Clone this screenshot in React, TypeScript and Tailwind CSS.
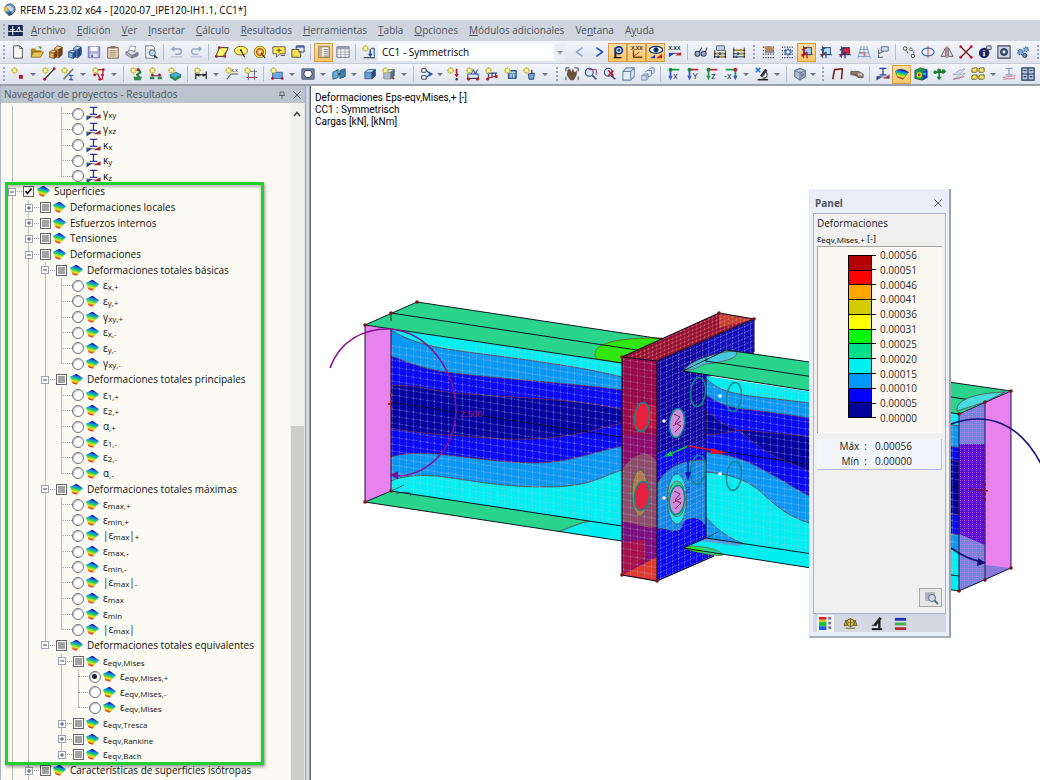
import type { ReactNode } from "react";

/* ---------- small drawing helpers ---------- */

const L = (d: string, stroke = "#333", w = 1, fill = "none") => (
  <path d={d} stroke={stroke} strokeWidth={w} fill={fill} strokeLinejoin="round" />
);
const F = (d: string, fill: string) => <path d={d} fill={fill} />;
const D = (x: number, y: number, fill = "#c8102e", r = 1.6) => <circle cx={x} cy={y} r={r} fill={fill} />;
const spark = (
  <g>
    <circle cx="4" cy="4" r="3.200" fill="#e6e070" stroke="#a8a840" strokeWidth="0.600" />
    <path d="M4 0V8M0 4H8" stroke="#b8b030" strokeWidth="0.700" />
    <circle cx="4" cy="4" r="1.600" fill="#fdfdc0" />
  </g>
);
const cube = (light: string, mid: string, dark: string) => (
  <g stroke={dark} strokeWidth="0.700" strokeLinejoin="round">
    <path d="M2 6L6 3L14 3L14 10L10 13.500L2 13.500Z" fill={mid} />
    <path d="M2 6L6 3L14 3L10 6Z" fill={light} />
    <path d="M10 6L14 3L14 10L10 13.500Z" fill={dark} />
  </g>
);
const stack = (light: string, mid: string, dark: string) => (
  <g stroke={dark} strokeWidth="0.600" strokeLinejoin="round">
    <path d="M6 4L10 1L15 2.500L15 11L11 14.500L6 13Z" fill={mid} />
    <path d="M6 4L10 1L15 2.500L11 5.500Z" fill={light} />
    <path d="M11 5.500L15 2.500L15 11L11 14.500Z" fill={dark} />
    <path d="M0.500 8L4 6L9 7L9 13L6 15.500L0.500 14Z" fill={mid} />
    <path d="M0.500 8L4 6L9 7L6 9Z" fill={light} />
    <path d="M6 9L9 7L9 13L6 15.500Z" fill={dark} />
    <path d="M7 4.500L9 5M2 10.500L4.500 11M2 12.500L4.500 13" stroke={light} strokeWidth="1" />
  </g>
);
const axisIcon = (text: string, a: string, b: string) => (
  <g>
    {L("M4 12V3", a, 2)}
    {L("M4 3H14", b, 2)}
    {D(4, 3, "#118833", 2.2)}
    {F("M1.500 10H6.500L4 15Z", a)}
    <text x="7" y="14" fontSize="10" fontFamily="Liberation Sans" fill="#234">{text}</text>
  </g>
);
const gridDots = (
  <path d="M1 2.500H15M1 6.500H15M1 10.500H15M1 14.500H15" stroke="#334" strokeWidth="1.300" strokeDasharray="1.300 1.500" />
);
const meshBox = (c: string, body: string) => (
  <g>
    {L("M4 1V15M1 11H15", "#222", 0.8)}
    <rect x="5" y="3" width="8" height="8" fill={c} stroke="#223a70" />
    {L("M2 6L8 3M2 13L8 8M8 15V8", body, 1.5)}
    {D(4, 11, "#c01020", 1.3)}
  </g>
);

const ICONS: Record<string, ReactNode> = {
  page: <g>{L("M3 1H10L13 4V15H3Z", "#444", 1, "#fff")}{L("M10 1V4H13", "#444")}</g>,
  open: <g>{F("M1 4H6L7 6H13V13H1Z", "#b08a1c")}{L("M1 14L4 8H15.500L12 14Z", "#7a5a10", 0.8, "#e7c75c")}{F("M9 1L14 2L12 5Z", "#7d9a3c")}</g>,
  stackA: stack("#f3cf8a", "#d09238", "#6a4018"),
  stackB: stack("#b9d3f6", "#5c8ad0", "#26457a"),
  save: <g>{L("M1.500 2H14.500V14.500H1.500Z", "#6a6ea6", 1, "#a9aed8")}{F("M4 2H12V7H4Z", "#fff")}{F("M4 10H12V14H4Z", "#e4e4f0")}{F("M5 11H7V14H5Z", "#555a90")}</g>,
  clip: <g>{L("M2 3H14V15H2Z", "#6a4a2a", 1, "#f4e6d0")}{F("M5 1H11V4H5Z", "#8a7a6a")}{L("M4 6.500H12M4 8.500H12M4 10.500H12M4 12.500H12", "#8a6a4a", 0.8)}</g>,
  print: <g>{L("M4 7L6 1L12 2L11 7Z", "#778", 0.8, "#fff")}{L("M1 8L7 6L15 9L8 12Z", "#667", 0.8, "#dadde6")}{L("M1 8L8 12V15L1 11Z", "#667", 0.8, "#b4bac8")}{L("M8 12L15 9V12L8 15Z", "#667", 0.8, "#8d93a8")}{D(12, 12, "#3a7ac8", 1)}</g>,
  preview: <g>{L("M2 1H10L12 3V15H2Z", "#667", 1, "#fff")}{L("M4 5H10M4 7H9M4 9H8", "#99a", 0.8)}<circle cx="9.500" cy="9" r="3.500" fill="#bcd8ee" stroke="#456" />{L("M12 12L15 15", "#345", 2)}</g>,
  undo: <g>{L("M4 4.500H10C14 4.500 14 10.500 10 10.500H6", "#8fa3c2", 1.8)}{F("M5 1V8L1 4.500Z", "#8fa3c2")}{L("M1 13.500H14", "#a9b8d0")}</g>,
  redo: <g>{L("M12 4.500H6C2 4.500 2 10.500 6 10.500H10", "#9aabc6", 1.8)}{F("M11 1V8L15 4.500Z", "#9aabc6")}{L("M2 13.500H15", "#a9b8d0")}</g>,
  selPar: <g>{L("M5 3H15L11 13H1Z", "#222", 1, "#fff46a")}{D(5, 3)}{D(1.5, 13)}{D(11, 13)}{L("M8 14L14 6", "#555")}</g>,
  selEll: <g><ellipse cx="8" cy="6.500" rx="7.500" ry="5" fill="#fff46a" stroke="#7a5a10" />{L("M8 6L12 14", "#222", 1.3)}{D(8, 6, "#222", 1.2)}</g>,
  selRing: <g><circle cx="8" cy="8" r="6.500" fill="#fff046" stroke="#8a6a20" /><circle cx="8" cy="8" r="4" fill="#f5b030" stroke="#a01818" />{D(8, 8, "#fff", 1.6)}{L("M9 9L14 15", "#333", 1.2)}</g>,
  selNote: <g>{L("M1 2H15V10H9L5 14V10H1Z", "#555", 1, "#ffe94a")}{L("M5 6H11M8 4V9M10 12H15", "#444")}</g>,
  selWin: <g>{L("M6 1H15V8H6Z", "#334", 1, "#dfe8f8")}{F("M6 1H15V3H6Z", "#3f63a8")}{L("M1 5H9V8H11V14H1Z", "#444", 1, "#f7e04e")}</g>,
  navList: <g>{L("M2 2H14V14H2Z", "#6a4a2a", 1, "#fff")}{F("M2 2H6V14H2Z", "#c9b18a")}{L("M7.500 5H13M7.500 7.500H13M7.500 10H13M7.500 12.500H13", "#555", 0.9)}</g>,
  table: <g>{L("M1 2H15V14H1Z", "#5a6070", 1, "#fff")}{F("M1 2H15V5H1Z", "#9aa2b4")}{L("M1 8H15M1 11H15M5.500 2V14M10.500 2V14", "#8a90a0", 0.8)}</g>,
  loadNew: <g>{L("M9.500 5V11", "#2a4a8a", 1.8)}{F("M7 10H12L9.500 14Z", "#2a4a8a")}{L("M10 4H14V13", "#5a78a8", 1.6)}{L("M2 14.500H15", "#333", 1.2)}{spark}</g>,
  left: L("M11 3L4 8L11 13", "#8fa2dc", 1.8),
  right: L("M5 3L12 8L5 13", "#2a55c0", 1.8),
  viewP: <g>{L("M5 14V3", "#182848", 2.4)}<circle cx="9" cy="6" r="4" fill="#dfe8ff" stroke="#123a80" strokeWidth="2" />{D(9, 6, "#123a80", 1.6)}{L("M3 14.500H12", "#111", 1.4)}</g>,
  viewX: <g>{L("M4 6V14H14", "#6a4a10", 1.6)}<text x="1" y="6" fontSize="6" fontWeight="700" fontFamily="Liberation Sans" fill="#502010">X.XX</text>{L("M4 13L11 8", "#b02020")}</g>,
  viewEye: <g><ellipse cx="8" cy="5.500" rx="7.500" ry="4" fill="#fff" stroke="#14356e" strokeWidth="1.500" />{D(8, 5.5, "#14458e", 3)}{D(8, 5.5, "#000", 1.2)}{F("M1 15L7 11V15Z", "#2a44b8")}{F("M15 15V10L8 15Z", "#c02020")}</g>,
  xxx: <g><text x="0.500" y="6" fontSize="6" fontWeight="700" fontFamily="Liberation Sans" fill="#222">X.XX</text>{L("M1 9.500H15", "#444")}{F("M1 9H8L1 14Z", "#2a44b8")}{F("M15 8L8 12H15Z", "#c02020")}</g>,
  glasses: <g><circle cx="4" cy="10" r="2.800" fill="#9fb0cc" stroke="#35405a" strokeWidth="1.300" /><circle cx="11" cy="10" r="2.800" fill="#9fb0cc" stroke="#35405a" strokeWidth="1.300" />{L("M6 8L9 3M13 8L15 3", "#35405a", 1.2)}</g>,
  abacusA: <g>{L("M2 6V15M14 6V15M1 10H15M1 13.500H15", "#222", 1.1)}{L("M4 1H13V6H4Z", "#456", 1, "#cfd8f0")}{D(5, 10, "#c8a020")}{D(8, 10, "#2a5a9a")}{D(11, 10, "#c8a020")}{D(6, 13.5, "#2a5a9a")}{D(10, 13.5, "#c8a020")}</g>,
  abacusB: <g>{L("M2 3V15M14 3V15M1 6H15M1 10H15M1 13.500H15", "#222", 1)}{D(5, 6, "#c8a020")}{D(10, 6, "#c8a020")}{D(7, 10, "#2a5a9a")}{D(11, 10, "#c8a020")}{D(5, 13.5, "#2a5a9a")}</g>,
  gridHand: <g>{gridDots}{F("M2 2L10 1L14 4L12 7L5 7Z", "#b58a62")}{L("M3 8H14", "#333")}</g>,
  gridSun: <g>{gridDots}<path d="M8 3V13M3 8H13M4.500 4.500L11.500 11.500M11.500 4.500L4.500 11.500" stroke="#2a58a8" /><circle cx="8" cy="8" r="2.600" fill="#fff" stroke="#2a58a8" strokeWidth="1.200" /></g>,
  planeA: meshBox("#9fd2f0", "#c01020"),
  planeB: meshBox("#b8dcf4", "#2458a0"),
  planeC: meshBox("#d8203a", "#203a80"),
  gridTilt: <g>{L("M5 1L1 15M8 1L8 15M11 1L15 15M3 5H13M2 9H14M1 13H15", "#6a8eae", 0.9)}{L("M3 9H9V13", "#b04050", 0.9)}</g>,
  objSnap: <g>{L("M6 2H14V7H6Z", "#567", 1, "#cfe0ee")}{L("M3 5V14M3 10L9 7M2 14H8", "#567", 1.2)}</g>,
  move: <g><circle cx="3.500" cy="4" r="2" fill="#fff" stroke="#333" /><circle cx="12.500" cy="12.500" r="2" fill="#fff" stroke="#333" /><circle cx="10" cy="5" r="1.600" fill="#fff" stroke="#555" />{L("M5 6L7 10M12 6L14 10", "#333", 0.8)}</g>,
  rotate: <g><ellipse cx="8" cy="8" rx="7" ry="4.500" fill="none" stroke="#3a6aa8" strokeWidth="1.300" />{L("M8 1V15", "#c04040", 1)}</g>,
  mirror: <g>{L("M6.500 3V13H1Z", "#555", 1, "#dde")}{L("M9.500 3V13H15Z", "#555", 1, "#dde")}{L("M8 1V15", "#c02020", 0.9)}</g>,
  divide: <g>{L("M2 2L14 14M14 2L2 14", "#7a1c1c", 1.6)}{D(2, 2)}{D(14, 2)}{D(2, 14)}{D(14, 14)}</g>,
  info: <g><circle cx="7" cy="9" r="6" fill="#1e2c66" /><text x="5.400" y="13" fontSize="10" fontWeight="700" fontFamily="Liberation Serif" fill="#fff">i</text>{L("M10 1H15V5H10Z", "#445", 1, "#cfd8e8")}</g>,
  settings: <g>{L("M1 1H15V15H1Z", "#445", 1.2, "#cdd6e2")}<circle cx="8" cy="8" r="4" fill="#3c5a88" stroke="#1c2c4a" />{D(8, 8, "#fff", 1.6)}</g>,
  gears: <g><circle cx="5" cy="8" r="3" fill="#7aa8dc" stroke="#335a8a" strokeDasharray="1.500 1" strokeWidth="1.300" /><circle cx="11.500" cy="5" r="2.600" fill="#8ab4dc" stroke="#335a8a" strokeDasharray="1.500 1" strokeWidth="1.300" /><circle cx="10" cy="12" r="2.400" fill="#5a88bc" stroke="#23446e" /></g>,

  node: <g>{F("M9 9H13.500V13.500H9Z", "#b01830")}{spark}</g>,
  line: <g>{L("M3 14L14 2", "#333", 1.3)}{D(3, 14)}{D(14, 2)}{spark}</g>,
  member: <g>{L("M3 14L14 2", "#777", 2)}{L("M9 9.500H14M11.500 9.500V14.500M9 14.500H14", "#2a48b0", 1.2)}{spark}</g>,
  poly: <g>{L("M3 8H7L9 14H12V9L13 3H6", "#a02030", 1.4)}{D(13, 3)}{D(9, 14)}{D(3, 9)}{D(12, 9)}{spark}</g>,
  supA: <g>{L("M9 2L12 6L8 9L12 13", "#2a7a38", 2.4)}{F("M4 11H14L12 15H5Z", "#2f8a48")}{D(9, 3)}{spark}</g>,
  supB: <g>{L("M3 10H14", "#333", 1.2)}{F("M1 11H6V14H1ZM10 11H15V14H10Z", "#2f8a48")}{D(4, 9)}{D(12, 9)}{spark}</g>,
  supC: <g>{L("M2 9L9 6L15 9L8 13Z", "#1e5a6a", 0.8, "#4ab0c8")}{F("M2 9V12L8 16V13ZM15 9V12L8 16V13Z", "#2f8a58")}{spark}</g>,
  dimH: <g>{L("M2 5V14M14 5V14M2 9H14", "#222", 1.3)}{F("M2 9L6 7V11ZM14 9L10 7V11Z", "#222")}{spark}</g>,
  dimX: <g>{L("M2 14L7 8H15", "#555", 1.2)}<text x="7" y="6" fontSize="6" fontFamily="Liberation Sans" fill="#222">x.x</text>{spark}</g>,
  frame: <g>{L("M3 5H15M3 12H15M5 3V15M12 3V15", "#667", 1)}{L("M3 12H15", "#b03030", 0.8)}{spark}</g>,
  surf: <g>{L("M3 6H14V13H3Z", "#2a5a9a", 1, "#6aa8e0")}{D(3, 13)}{D(14, 13)}{spark}</g>,
  opening: <g>{L("M1 2H15V14H1Z", "#4a5a78", 1, "#6f86ac")}{L("M5 4H11L13 8L10 12H6L3 8Z", "#333", 1, "#fff")}</g>,
  solidP: <g>{L("M1 6L7 3V12L1 14Z", "#24567a", 1, "#6ab0d8")}{L("M9 4L15 2V11L9 13Z", "#24567a", 1, "#3a80b0")}{L("M7 8H9", "#333", 2)}</g>,
  cubeB: cube("#c0dcf4", "#6a9ad0", "#24467a"),
  cubeN: <g>{cube("#e4e8ee", "#b0bccc", "#5a6a80")}{spark}{D(13, 13, "#b02020", 1.3)}</g>,
  release: <g>{L("M2 2H7V6H2ZM2 10H7V14H2Z", "#333", 1, "#fff")}{L("M7 4L12 8L7 12", "#2458a0", 1.3)}{F("M10 5L15 8L10 11Z", "#2458a0")}</g>,
  loadP: <g>{L("M11 2V9", "#c01828", 2)}{F("M8.500 8H13.500L11 12Z", "#c01828")}{D(11, 14, "#333", 1.4)}{spark}</g>,
  loadA: <g>{L("M2 13V8H14V13M6 8L8 3L11 8L13 3", "#2a4aa0", 1.2)}{L("M1 13H15", "#222", 1.2)}{D(3, 14)}{D(13, 14)}{spark}</g>,
  loadB: <g>{L("M2 7H14M4 7V12M8 7V12M12 7V12", "#2a4aa0", 1.3)}{L("M2 13L14 10", "#b02020", 1.3)}{D(3, 14)}{D(13, 11)}{spark}</g>,
  loadC: <g>{L("M5 4H14V13H5Z", "#1c3c6a", 1, "#5a8cc4")}{L("M6 6H13M8 8V12M11 8V12", "#fff", 1)}{spark}</g>,
  loadD: <g>{L("M10 3V9", "#2a4aa0", 1.6)}{L("M6 8L13 7L12 14H7Z", "#1c3c6a", 1, "#7ca4d0")}{spark}</g>,
  hand: <g>{F("M3 3L6 2L7 6L9 2L11 6L14 4L13 10L10 15H6L2 9Z", "#6a5242")}{L("M1 5V1H5M11 1H15V5M1 11V15M15 11V15", "#333")}</g>,
  zoomW: <g><circle cx="6" cy="6" r="4.500" fill="#d8e8f8" stroke="#34507e" strokeWidth="1.200" />{L("M9.500 9.500L14 14", "#34507e", 2)}{L("M5 3H14V9", "#a02040", 1)}</g>,
  zoomX: <g><circle cx="6" cy="6" r="4.500" fill="#d8e8f8" stroke="#34507e" strokeWidth="1.200" />{L("M9.500 9.500L14 14", "#34507e", 2)}{L("M6 4L12 10M12 4L6 10", "#c01828", 1.8)}</g>,
  boxWire: <g>{L("M1 5H10V15H1ZM1 5L5 1H14V11L10 15M10 5L14 1", "#6a86ac", 1.2, "#e4ecf6")}</g>,
  boxes: <g>{L("M1 10L3 8H8V13L6 15H1ZM5 6L7 4H12V9L10 11H8M9 3L11 1H15V6L13 8H12", "#6a86ac", 1.1, "#dde6f2")}{L("M1 10H6V15M6 10L8 8", "#6a86ac", 1)}</g>,
  axX: axisIcon("x", "#3858c8", "#18a048"),
  axY: axisIcon("Y", "#3858c8", "#c82038"),
  axZ: axisIcon("z", "#18a048", "#c82038"),
  axXm: <g>{L("M2 3H13V11", "#18a048", 2)}{F("M10.500 10H15.500L13 15Z", "#3858c8")}{D(13, 3, "#c01828", 2.2)}<text x="0" y="14" fontSize="10" fontFamily="Liberation Sans" fill="#234">-x</text></g>,
  scope: <g>{L("M3 14.500H15", "#222", 1.8)}{L("M13 3L7 11", "#333", 3)}{L("M9 13C14 13 15 9 13 6", "#333", 1.2)}{L("M1 1L6 6M6 1L1 6", "#2878c8", 1.8)}</g>,
  cubeG: <g>{L("M2 4L8 1.500L14 4V11L8 15L2 11Z", "#4a5a78", 1, "#b4c0d0")}{L("M2 4L8 7L14 4M8 7V15", "#4a5a78", 0.9)}{F("M9 8L13 6V10L9 13Z", "#7488a8")}</g>,
  bent: L("M2 14L4 3L13 2L12 14", "#7a2024", 1.8),
  beam: <g>{F("M1 5H10L15 8V12H9L1 8Z", "#8a7a76")}{L("M1 5H10L15 8V12H9V9H1Z", "#443", 0.8)}{F("M9 7H14V10H9Z", "#c8b8b0")}</g>,
  memRes: <g>{L("M4 1.500H12M8 1.500V9M4 9H12", "#2a3aa0", 1.4)}{F("M0.500 11H7L0.500 15.500Z", "#2a3aa0")}{F("M15.500 8.500V13H8.500Z", "#c02030")}{L("M0.500 10.500L15.500 12.500", "#444", 0.8)}</g>,
  rainbow: <path d="M0.500 5C3 2 9 1 15.500 6L9 14C7 12.500 4 13 2.500 11Z" fill="url(#heat)" stroke="#333" strokeWidth="0.500" />,
  surface: <path d="M0 4.500L8 1L16 6.500L8 14.500L3 12.500Z" fill="url(#heat)" />,
  heatCube: <g><path d="M1 4L7 1L15 3V12L9 15L1 13Z" fill="#1a9a48" stroke="#123" strokeWidth="0.700" /><circle cx="6" cy="9" r="3" fill="#f0e020" /><circle cx="6" cy="9" r="1.500" fill="#d02020" /><path d="M10 5L15 3V12L10 15Z" fill="#1c3cb8" />{D(12, 8, "#20d0d0", 1.6)}</g>,
  supG: <g>{L("M7 4V12M2 6H12", "#1a7a2a", 1.8)}{F("M4 11H10L7 15ZM11 3L15 5L11 8Z", "#1a8a2e")}{D(7, 4, "#1a7a2a", 2.2)}{D(2.5, 6, "#1a7a2a", 2)}{D(12, 5, "#1a7a2a", 2.4)}</g>,
  plates: <g>{L("M1 9L8 4L15 2L9 8ZM2 14L9 9L15 7L9 13Z", "#9aa4b8", 0.9, "#d8e0f0")}{L("M1 14L14 11", "#b05060", 0.8)}</g>,
  notes: <g>{L("M1 2L3 1H7V5L6 6H1ZM9 2L11 1H15V5L14 6H9ZM1 10L3 9H7V13L6 14H1ZM9 10L11 9H15V13L14 14H9Z", "#665a10", 1, "#f2e46a")}</g>,
  secCut: <g>{L("M4 1.500H12M8 1.500V9M4 9H12", "#8aa0cc", 1.4)}{L("M1 12L15 10M1 14L15 13", "#d08a98", 1.2)}</g>,
  grid4: <g>{L("M1 1H15V15H1ZM1 8H15M8 1V15", "#2a3a5a", 1.4, "#b4c4de")}{L("M3 4H6M10 4H13M3 11H6M10 11H13", "#2a3a5a", 1.2)}</g>,
};

function Icon({ name, className = "size-4" }: { name: string; className?: string }) {
  return (
    <svg viewBox="0 0 16 16" className={`${className} shrink-0`} aria-hidden="true">
      {ICONS[name]}
    </svg>
  );
}

/* ---------- toolbars ---------- */

const Sep = () => (
  <span className="flex h-4 w-[7px] shrink-0 justify-center">
    <span className="w-px bg-[#b4bccb]" />
  </span>
);
const Grip = ({ wide = false }: { wide?: boolean }) => (
  <span className={`flex h-4 shrink-0 items-center justify-center ${wide ? "w-[11px]" : "w-2"}`}>
    <span className="h-[14px] border-l-2 border-dotted border-[#9da6b8]" />
  </span>
);

/* "|" separator, ":" grip, "v" drop arrow, "'" narrow drop arrow, "*name" pressed button */
function Tools({ items }: { items: string }) {
  return (
    <>
      {items.split(" ").map((item, i) => {
        if (item === "|") return <Sep key={i} />;
        if (item === ":") return <Grip key={i} wide />;
        if (item === "v" || item === "'")
          return (
            <button key={i} type="button" aria-label="Más" className={`flex h-5 shrink-0 items-center justify-center ${item === "v" ? "w-3" : "w-2"}`}>
              <span className="border-x-[3px] border-t-[3px] border-x-transparent border-t-[#6b7280]" />
            </button>
          );
        const on = item[0] === "*";
        const name = on ? item.slice(1) : item;
        return (
          <button
            key={i}
            type="button"
            aria-label={name}
            className={`flex h-[19px] w-[19px] shrink-0 items-center justify-center ${on ? "border border-[#d39a4a] bg-linear-to-b from-[#fbdca4] to-[#fbc766]" : ""}`}
          >
            <Icon name={name} className="size-[14px]" />
          </button>
        );
      })}
    </>
  );
}

const MENU: [string, string, string][] = [
  ["", "A", "rchivo"], ["", "E", "dición"], ["", "V", "er"], ["", "I", "nsertar"], ["", "C", "álculo"], ["", "R", "esultados"],
  ["", "H", "erramientas"], ["", "T", "abla"], ["", "O", "pciones"], ["", "M", "ódulos adicionales"], ["Ve", "n", "tana"], ["A", "y", "uda"],
];

/* ---------- navigator tree ---------- */

type Row = { d: number; bars: string; kind: "check" | "mixed" | "radio"; exp?: "+" | "-"; last?: boolean; label: string; sub?: string; tail?: string; on?: boolean; icon?: string };

const leaf = (label: string, sub: string, last = false, tail = "", bars = "012"): Row => ({ d: 3, bars, kind: "radio", label, sub, last, tail });
const group = (d: number, bars: string, exp: "+" | "-", label: string, last = false): Row => ({ d, bars, kind: "mixed", exp, label, last });
const member = (label: string, sub: string, last = false): Row => ({ d: 3, bars: "0", kind: "radio", label, sub, last, icon: "memRes" });

const ROWS: Row[] = [
  member("γ", "xy"), member("γ", "xz"), member("κ", "x"), member("κ", "y"), member("κ", "z", true),
  { d: 0, bars: "", kind: "check", exp: "-", label: "Superficies" },
  group(1, "0", "+", "Deformaciones locales"),
  group(1, "0", "+", "Esfuerzos internos"),
  group(1, "0", "+", "Tensiones"),
  group(1, "0", "-", "Deformaciones"),
  group(2, "01", "-", "Deformaciones totales básicas"),
  leaf("ε", "x,+"), leaf("ε", "y,+"), leaf("γ", "xy,+"), leaf("ε", "x,-"), leaf("ε", "y,-"), leaf("γ", "xy,-", true),
  group(2, "01", "-", "Deformaciones totales principales"),
  leaf("ε", "1,+"), leaf("ε", "2,+"), leaf("α", ",+"), leaf("ε", "1,-"), leaf("ε", "2,-"), leaf("α", ",-", true),
  group(2, "01", "-", "Deformaciones totales máximas"),
  leaf("ε", "max,+"), leaf("ε", "min,+"), leaf("|ε", "max", false, "+"), leaf("ε", "max,-"), leaf("ε", "min,-"),
  leaf("|ε", "max", false, "-"), leaf("ε", "max"), leaf("ε", "min"), leaf("|ε", "max", true, " "),
  group(2, "01", "-", "Deformaciones totales equivalentes", true),
  { d: 3, bars: "01", kind: "mixed", exp: "-", label: "ε", sub: "eqv,Mises" },
  { d: 4, bars: "013", kind: "radio", label: "ε", sub: "eqv,Mises,+", on: true },
  { d: 4, bars: "013", kind: "radio", label: "ε", sub: "eqv,Mises,-" },
  { d: 4, bars: "013", kind: "radio", label: "ε", sub: "eqv,Mises", last: true },
  { d: 3, bars: "01", kind: "mixed", exp: "+", label: "ε", sub: "eqv,Tresca" },
  { d: 3, bars: "01", kind: "mixed", exp: "+", label: "ε", sub: "eqv,Rankine" },
  { d: 3, bars: "01", kind: "mixed", exp: "+", label: "ε", sub: "eqv,Bach", last: true },
  group(1, "0", "+", "Características de superficies isótropas"),
  group(1, "0", "+", ""),
];

const cellWidth = (i: number) => (i % 2 ? "w-[17px]" : "w-4");

function TreeRow({ row, index }: { row: Row; index: number }) {
  const id = `node-${index}`;
  return (
    <li className="flex min-h-0 items-center overflow-visible">
      {Array.from({ length: row.d }, (_, i) => (
        <span key={i} className={`flex shrink-0 justify-center self-stretch ${cellWidth(i)}`}>
          {row.bars.includes(String(i)) && <span className="w-px bg-[#bdbdb8]" />}
        </span>
      ))}
      <span className={`grid shrink-0 self-stretch ${cellWidth(row.d)}`}>
        <span className={`col-start-1 row-start-1 w-px justify-self-center bg-[#bdbdb8] ${row.last ? "h-1/2" : ""} ${row.d === 0 ? "mt-2" : ""}`} />
        <span className="col-start-1 row-start-1 ml-2 -mr-1 self-center border-t border-dotted border-[#a0a09c]" />
        {row.exp && (
          <button type="button" aria-label={row.exp === "+" ? "Expandir" : "Contraer"} className="col-start-1 row-start-1 flex size-2 items-center justify-center self-center justify-self-center border border-[#9aa4b4] bg-white">
            <svg viewBox="0 0 6 6" className="size-[6px]"><path d={row.exp === "+" ? "M1 3H5M3 1V5" : "M1 3H5"} stroke="#3a4a7a" /></svg>
          </button>
        )}
      </span>
      <span className={`grid shrink-0 place-items-center ${cellWidth(row.d + 1)}`}>
        {row.kind === "radio" ? (
          <>
            <input id={id} type="radio" name={row.icon ? "member" : "surface"} defaultChecked={row.on} className="col-start-1 row-start-1 size-3 appearance-none rounded-full border border-[#6b7078] bg-white shadow-[inset_1px_1px_1px_#c4c8cc]" />
            {row.on && <span className="pointer-events-none col-start-1 row-start-1 size-[5px] rounded-full bg-[#16202c]" />}
          </>
        ) : (
          <>
            <input id={id} type="checkbox" aria-label={row.label ? undefined : "Resultados"} defaultChecked={row.kind === "check"} className="col-start-1 row-start-1 size-[11px] appearance-none border border-[#62666c] bg-white" />
            {row.kind === "mixed" && <span className="pointer-events-none col-start-1 row-start-1 size-[7px] bg-[#a2a2a2]" />}
            {row.kind === "check" && <svg viewBox="0 0 9 9" className="pointer-events-none col-start-1 row-start-1 size-[9px]"><path d="M1.500 4L3.500 6.500L7.500 1.500" stroke="#111" strokeWidth="1.700" fill="none" /></svg>}
          </>
        )}
      </span>
      <Icon name={row.icon ?? "surface"} className={row.icon ? "size-[15px]" : "size-[13px]"} />
      {row.label && (
        <label htmlFor={id} className={`text-[10px] leading-[15px] whitespace-nowrap text-[#111] ${row.icon ? "pl-0.5" : "pl-1"}`}>
          {row.label}
          {row.sub && <sub className="-bottom-px text-[8px]">{row.sub}</sub>}
          {row.tail && <>|{row.tail !== " " && <sub className="-bottom-px text-[8px]">{row.tail}</sub>}</>}
        </label>
      )}
    </li>
  );
}

/* ---------- finite element view ---------- */

const C = { cyan: "#00eef0", sky: "#0a98f5", blue: "#0808f4", navy: "#0000a0", green: "#2ad48c", lime: "#30e810", pink: "#e782ef" };

const LEFT_T = {
  sky: "M391 330C403 337 415 344 453 350C500 357 560 362 622 377",
  blue: "M391 356C410 363 425 370 453 373C500 379 560 382 622 390",
  navy: "M391 386C405 383 430 390 453 393C520 398 590 400 622 410",
  blue2: "M391 428C420 434 450 435 503 439C560 441 590 431 622 423",
  sky2: "M391 457C405 452 430 453 437 454C470 457 500 463 537 463C570 462 590 453 622 446",
  cyan2: "M391 481C405 475 420 475 437 476C470 480 500 487 545 487C590 487 600 477 622 470",
};
const RIGHT_T = {
  sky: "M706 378C717 390 730 394 767 398C830 405 900 415 959 426",
  blue: "M706 395C723 407 735 408 743 409C800 415 880 430 959 448",
  sky2: "M706 452C735 455 750 462 767 472C790 484 800 492 812 497C860 515 910 525 959 535",
  cyan2: "M706 472C735 474 750 483 760 491C780 510 790 517 812 524C860 540 910 545 959 550",
};

function Bands({ t, x, bottom, order }: { t: Record<string, string>; x: number; bottom: number; order: [string, string][] }) {
  return (
    <>
      {order.map(([key, fill]) => (
        <path key={key} d={`${t[key]}V${bottom}H${x}Z`} fill={fill} />
      ))}
      {order.map(([key]) => (
        <path key={key} d={t[key]} fill="none" stroke="#7c3038" strokeWidth="0.800" />
      ))}
    </>
  );
}

function Bolt({ x, y, fill }: { x: number; y: number; fill: string }) {
  return <ellipse cx={x} cy={y} rx="7.500" ry="14.500" fill={fill} stroke="#0a8a8c" strokeWidth="1.500" transform={`rotate(6 ${x} ${y})`} />;
}

const Corner = ({ p }: { p: [number, number][] }) => <>{p.map(([x, y]) => <circle key={`${x}-${y}`} cx={x} cy={y} r="1.800" fill="#7c1018" />)}</>;

function Model() {
  return (
    <svg viewBox="311 86 729 694" className="block h-[694px] w-[729px] shrink-0" role="img" aria-label="Modelo">
      <defs>
        <pattern id="mesh" width="7" height="7" patternUnits="userSpaceOnUse" patternTransform="skewY(8.500)">
          <path d="M0 0.500H7M0.500 0V7" stroke="#c0c4e8" strokeWidth="0.700" strokeDasharray="1.600 1.200" opacity="0.550" />
        </pattern>
        <pattern id="meshPlate" width="6" height="6" patternUnits="userSpaceOnUse" patternTransform="skewY(-23)">
          <path d="M0 0.500H6M0.500 0V6" stroke="#d0c8e8" strokeWidth="0.700" strokeDasharray="1.800 1.200" opacity="0.600" />
        </pattern>
        <pattern id="meshFine" width="4" height="4" patternUnits="userSpaceOnUse" patternTransform="skewY(-23)">
          <path d="M0 0.500H4M0.500 0V4" stroke="#e0a0b8" strokeWidth="0.600" strokeDasharray="1.500 1.500" opacity="0.700" />
        </pattern>
        <pattern id="meshEnd" width="4" height="4" patternUnits="userSpaceOnUse">
          <path d="M0 0.500H4M0.500 0V4" stroke="#e888f0" strokeWidth="0.600" strokeDasharray="1 1" opacity="0.600" />
        </pattern>
        <clipPath id="webL"><path d="M391 329L622 363V526L391 491Z" /></clipPath>
        <clipPath id="webR"><path d="M706 376L959 414V577L706 538Z" /></clipPath>
        <clipPath id="side"><path d="M622 357L657 361V581L622 575Z" /></clipPath>
        <clipPath id="face"><path d="M657 361L754 319V360L706 378V538L714 556L657 581Z" /></clipPath>
      </defs>

      {/* left beam */}
      <path d="M365 502L391 491L622 526V541Z" fill={C.green} />
      <path d="M560 531C572 527 580 522 592 521L622 526V541Z" fill={C.cyan} />
      <path d="M560 531C572 527 580 522 592 521" stroke="#7c3038" fill="none" strokeWidth="0.800" />
      <g clipPath="url(#webL)">
        <rect x="391" y="320" width="231" height="220" fill={C.cyan} />
        <Bands t={LEFT_T} x={391} bottom={540} order={[["sky", C.sky], ["blue", C.blue], ["navy", C.navy], ["blue2", C.blue], ["sky2", C.sky], ["cyan2", C.cyan]]} />
        <rect x="391" y="345" width="231" height="190" fill="url(#mesh)" />
        <path d="M391 402L622 437" stroke="#000038" />
      </g>
      <path d="M365 325L417 302L662 339L622 363Z" fill={C.green} />
      <path d="M597 359C588 346 610 337 662 338L622 363Z" fill={C.lime} stroke="#6a5a20" strokeWidth="0.800" />
      <path d="M365 325L391 329V491L365 502Z" fill={C.pink} />
      <path d="M417 302L662 339M391 313L650 352M365 325L622 363M365 325L417 302M365 325V502L391 491V329M391 313V321M365 502L622 541M391 491L622 526" stroke="#101820" fill="none" strokeWidth="1" />
      <path d="M396 494C402 491 415 492 410 496M391 491L404 485" stroke="#333" fill="none" strokeWidth="0.700" />
      <Corner p={[[417, 302], [391, 313], [365, 325], [365, 502], [391, 491]]} />
      <path d="M388 404H391M391 394V410" stroke="#a02020" strokeWidth="2" strokeDasharray="3 3" />

      {/* end plate */}
      <path d="M622 357L719 313L754 319L657 361Z" fill="#98102c" />
      <path d="M719 313V328L754 319Z" fill="#c84028" />
      <path d="M622 357L719 313L754 319L657 361Z" fill="url(#meshFine)" />
      <g clipPath="url(#side)">
        <rect x="622" y="350" width="35" height="235" fill="#980a48" />
        <rect x="632" y="405" width="25" height="24" fill="#c01440" />
        <rect x="622" y="435" width="35" height="145" fill="#8c0c6c" />
        <path d="M622 470C635 450 650 450 657 462V527C645 530 635 522 622 522Z" fill="#8c4c6a" />
        <path d="M622 522C635 522 645 530 657 527V560H622Z" fill="#7c1080" />
        <path d="M622 542L645 540V560L622 575Z" fill="#a8104c" />
        <path d="M622 575L657 557V585Z" fill="#de3a30" />
        <ellipse cx="640" cy="493" rx="8" ry="23" fill="#b07850" stroke="#4a6a48" />
        <rect x="622" y="350" width="35" height="235" fill="url(#mesh)" opacity="0.800" />
      </g>
      <g clipPath="url(#face)">
        <path d="M657 361L754 319V540L657 581Z" fill="#1010c0" />
        <path d="M657 361L706 342V440L657 452Z" fill="#1208a8" />
        <path d="M657 455C670 447 690 447 706 450V466L657 484Z" fill={C.blue} />
        <path d="M657 484C668 466 680 460 706 460V527C700 516 692 518 686 520C680 526 684 532 674 531C666 531 664 527 657 529Z" fill="#108ae8" stroke="#7c3038" strokeWidth="0.700" />
        <path d="M657 530C664 527 666 531 674 531C684 532 680 526 686 520C692 518 700 516 706 527V570L657 585Z" fill={C.blue} />
        <ellipse cx="677" cy="499" rx="9.500" ry="25" fill={C.cyan} stroke="#7c3038" strokeWidth="0.700" />
        <ellipse cx="677" cy="499" rx="8.500" ry="18" fill={C.green} stroke="#7c3038" strokeWidth="0.700" />
        <rect x="657" y="315" width="98" height="270" fill="url(#meshPlate)" />
      </g>

      {/* right beam web */}
      <g clipPath="url(#webR)">
        <rect x="706" y="370" width="253" height="215" fill={C.cyan} />
        <Bands t={RIGHT_T} x={706} bottom={600} order={[["sky", C.sky], ["blue", C.blue], ["sky2", C.sky], ["cyan2", C.cyan]]} />
        <path d="M706 410C715 418 725 427 738 430C725 434 715 434 706 435Z" fill={C.navy} stroke="#7c3038" strokeWidth="0.700" />
        <path d="M738 430C770 432 900 445 959 462V515C890 505 790 465 767 452C757 445 748 438 738 430Z" fill={C.navy} stroke="#7c3038" strokeWidth="0.700" />
        <path d="M706 517C715 528 730 540 748 545H706Z" fill={C.sky} stroke="#7c3038" strokeWidth="0.700" />
        <rect x="706" y="385" width="253" height="210" fill="url(#mesh)" />
        <path d="M706 449L959 487" stroke="#000038" />
      </g>
      <path d="M622 357L719 313L754 319L657 361ZM622 357V575L657 581V361M657 581L714 556M754 319V352M706 376V540" stroke="#140a28" fill="none" strokeWidth="1.100" />

      {/* right beam flanges */}
      <path d="M683 371L726 350L1011 391L959 414Z" fill={C.green} />
      <path d="M684 370C690 361 715 352 735 351C742 355 730 362 705 364C698 366 695 371 684 370Z" fill="#48c8e0" stroke="#6a3038" strokeWidth="0.700" />
      <path d="M683 548L706 538L985 580L959 591Z" fill={C.cyan} />
      <path d="M706 538L745 544L738 546L700 541Z" fill="#58a0e0" />
      <path d="M683 548C695 543 722 550 723 555C715 557 700 553 683 548Z" fill={C.green} stroke="#6a5a20" strokeWidth="0.700" />
      <path d="M686 548C695 545 703 550 704 552C698 553 692 551 686 548Z" fill={C.lime} />
      <path d="M683 371L726 350L1011 391M683 371L959 414M705 361L985 402M683 548L706 538L985 580M683 548L959 591" stroke="#101820" fill="none" strokeWidth="1" />
      <path d="M706 538L718 532M706 361V355" stroke="#222" strokeWidth="0.700" />
      <path d="M957 411C955 400 975 393 1005 392L985 402Z" fill="#48dce0" stroke="#6a3038" strokeWidth="0.700" />

      {/* right end plane */}
      <path d="M985 402L1011 391V568L985 580Z" fill={C.pink} />
      <path d="M985 565L1011 568L959 591Z" fill="#8878d8" />
      <path d="M959 414L985 402V580L959 591Z" fill="#7484dc" />
      <path d="M959 444L985 444V545L959 534Z" fill="#5a10d0" />
      <path d="M959 414L985 402V580L959 591Z" fill="url(#meshEnd)" />
      <path d="M959 414V591L1011 568V391L959 414M985 402V580" stroke="#101848" fill="none" strokeWidth="1" />
      <path d="M970 489L989 491M985 483V501" stroke="#7c1018" strokeWidth="1.400" strokeDasharray="3 2" />
      <Corner p={[[959, 414], [985, 402], [1011, 391], [959, 591], [985, 580], [1011, 568]]} />
      <Corner p={[[622, 357], [719, 313], [754, 319], [622, 575], [657, 581]]} />

      {/* bolts */}
      <Bolt x={642} y={417} fill="#e82040" />
      <Bolt x={642} y={496} fill="#e82040" />
      {[423, 500].map((y) => (
        <g key={y}>
          <Bolt x={677} y={y} fill="#c890dc" />
          <path d={`M674 ${y - 9}L680 ${y - 6}L675 ${y}L681 ${y + 3}L675 ${y + 9}M673 ${y + 3}L681 ${y - 2}`} stroke="#981850" fill="none" />
          <circle cx="664" cy={y - 2} r="1.800" fill="#fff" />
        </g>
      ))}
      <Bolt x={698} y={392} fill="none" />
      <Bolt x={734} y={397} fill="none" />
      <Bolt x={698} y={470} fill="none" />
      <Bolt x={734} y={476} fill="none" />
      <circle cx="720" cy="396" r="1.800" fill="#fff" />
      <circle cx="720" cy="474" r="1.800" fill="#fff" />

      {/* coordinate axes */}
      <path d="M688 446L668 455" stroke="#10c040" strokeWidth="1.500" />
      <path d="M663 457L671 451L673 456Z" fill="#10c040" />
      <path d="M688 446L718 451" stroke="#f01020" strokeWidth="1.500" />
      <path d="M728 453L711 448V454Z" fill="#f01020" />
      <path d="M688 446V474" stroke="#1010c0" strokeWidth="1.500" />
      <path d="M688 481L685 472H691Z" fill="#1010c0" />
      <text x="685" y="493" fontSize="9" fontFamily="Liberation Sans" fill="#1448c0">Z</text>

      {/* end moments */}
      <path d="M330 368C340 340 365 328 390 329C428 332 456 370 456 412C454 452 425 476 396 476" stroke="#8a1090" fill="none" strokeWidth="1.600" />
      <path d="M390 475L398 471V479Z" fill="#7a1090" />
      <text x="460" y="417" fontSize="9" fontFamily="Liberation Sans" fill="#a81890">2.500</text>
      <path d="M951 424C985 412 1020 420 1043 468" stroke="#10107c" fill="none" strokeWidth="1.600" />
      <path d="M951 548C962 556 972 560 982 562" stroke="#10107c" fill="none" strokeWidth="1.600" />
      <path d="M986 563L978 558L977 566Z" fill="#10107c" />
    </svg>
  );
}

/* ---------- floating legend panel ---------- */

const SCALE: [string, string][] = [
  ["0.00056", "bg-[#b40000]"], ["0.00051", "bg-[#ff0000]"], ["0.00046", "bg-[#ffa500]"], ["0.00041", "bg-[#d2cc00]"],
  ["0.00036", "bg-[#ffff00]"], ["0.00031", "bg-[#00f800]"], ["0.00025", "bg-[#00e08a]"], ["0.00020", "bg-[#00f0f0]"],
  ["0.00015", "bg-[#0096ff]"], ["0.00010", "bg-[#0000ff]"], ["0.00005", "bg-[#000098]"],
];

function Panel() {
  return (
    <section className="absolute top-[103px] left-[498px] flex w-[142px] flex-col border-r-2 border-b-2 border-l border-r-[#9aa0ac] border-b-[#a8aeba] border-l-[#dfe5ee] bg-[#e9eef8] px-[3px] pb-1 text-[#222]">
      <header className="flex h-6 items-center justify-between pt-1 pr-1 pl-0.5">
        <h2 className="text-[10px] font-bold text-[#4c5460]">Panel</h2>
        <button type="button" aria-label="Cerrar">
          <svg viewBox="0 0 8 8" className="size-2"><path d="M0.500 0.500L7.500 7.500M7.500 0.500L0.500 7.500" stroke="#555" /></svg>
        </button>
      </header>
      <div className="flex flex-col border border-[#a9b4c6] bg-[#f0f0f0] px-[3px] pt-0.5 pb-1.5">
        <p className="text-[10px] leading-[15px]">Deformaciones</p>
        <p className="text-[9px] leading-[15px] text-black">ε<sub className="-bottom-px text-[8px]">eqv,Mises,+</sub> [-]</p>
        <div className="flex h-[187px] border-t border-l border-[#a4a4a4] bg-[#fbf8f1] pt-2 pl-[30px]">
          <div className="flex h-[163px] w-6 flex-col border border-black">
            {SCALE.map(([v, c], i) => <span key={v} className={`flex-1 ${i ? "border-t border-black" : ""} ${c}`} />)}
          </div>
          <div className="-mt-[7px] flex h-[177px] flex-col justify-between text-[10px] leading-[14px] text-[#2c2c2c]">
            {[...SCALE.map(([v]) => v), "0.00000"].map((v) => (
              <span key={v} className="flex items-center gap-1"><i className="h-px w-1 bg-black" />{v}</span>
            ))}
          </div>
        </div>
        <dl className="mt-[6px] grid grid-cols-[54px_1fr] border-r border-b border-[#b8bcf0] bg-[#f2f5fa] text-[10px] leading-[15px]">
          <dt className="pr-1 text-right">Máx&nbsp; :</dt><dd className="pl-1">0.00056</dd>
          <dt className="pr-1 text-right">Mín&nbsp; :</dt><dd className="pl-1">0.00000</dd>
        </dl>
        <button type="button" aria-label="Detalle" className="mt-[118px] flex h-[19px] w-[23px] items-center justify-center self-end border border-[#a8a8a8] bg-[#e6e6e6]">
          <svg viewBox="0 0 16 16" className="size-4"><path d="M2 2H12V11H2Z" fill="#b8bcc4" /><path d="M2 4H12M2 6H12M2 8H12" stroke="#999" strokeWidth="0.500" /><circle cx="9" cy="8" r="3.500" fill="#d4dce8" stroke="#55688a" /><path d="M11.500 10.500L15 14" stroke="#55688a" strokeWidth="2" /></svg>
        </button>
      </div>
      <div role="tablist" className="flex h-[18px] items-center gap-[9px] bg-[#d3d8e2] pl-1">
        <button type="button" role="tab" aria-label="Escala" className="flex h-[17px] w-[17px] items-center justify-center bg-[#f4f6fa]">
          <svg viewBox="0 0 16 16" className="size-[15px]"><path d="M1 1H9V4H1Z" fill="#e02020" /><path d="M1 4H9V6H1Z" fill="#f0c020" /><path d="M1 6H9V11H1Z" fill="#28c038" /><path d="M1 11H9V15H1Z" fill="#2058e0" /><path d="M11 1H14V4H11ZM11 6H14V9H11ZM11 11H14V14H11Z" fill="#778" /></svg>
        </button>
        <button type="button" role="tab" aria-label="Factores">
          <svg viewBox="0 0 16 16" className="size-[15px]"><path d="M2 5H14M8 2V12M3 13H13M3 5L1 10H5ZM13 5L11 10H15Z" stroke="#6a5a18" fill="#c8b048" /><circle cx="8" cy="7" r="4" fill="#d8c058" stroke="#6a5a18" /><path d="M8 3V11M5 7H11" stroke="#6a5a18" strokeWidth="0.800" /></svg>
        </button>
        <button type="button" role="tab" aria-label="Filtro" className="pl-0.5">
          <svg viewBox="0 0 16 16" className="size-[15px]"><path d="M3 14H14" stroke="#111" strokeWidth="2" /><path d="M12.500 2L6 10" stroke="#222" strokeWidth="3" /><path d="M11 5V13" stroke="#222" strokeWidth="2.500" /><path d="M3 10H8" stroke="#222" /></svg>
        </button>
        <button type="button" role="tab" aria-label="Capas">
          <svg viewBox="0 0 16 16" className="size-[15px]"><path d="M2 2H14V5H2Z" fill="#2030b0" /><path d="M2 7H14V10H2Z" fill="#40b048" /><path d="M2 12H14V15H2Z" fill="#c02838" /></svg>
        </button>
      </div>
    </section>
  );
}

/* ---------- page ---------- */

export default function App() {
  return (
    <div className="flex h-screen flex-col overflow-hidden bg-white font-['Open_Sans','Noto_Sans',sans-serif] text-[#1c1c1c]">
      <svg className="absolute size-0" aria-hidden="true">
        <defs>
          <linearGradient id="heat" x1="0.650" y1="0" x2="0.350" y2="1">
            <stop offset="0.120" stopColor="#1414a8" />
            <stop offset="0.300" stopColor="#1088f0" />
            <stop offset="0.480" stopColor="#20d060" />
            <stop offset="0.700" stopColor="#e4e820" />
            <stop offset="0.920" stopColor="#e02818" />
          </linearGradient>
        </defs>
      </svg>

      <header className="flex h-5 shrink-0 items-center gap-1 pl-0.5">
        <svg viewBox="0 0 16 16" className="size-[14px]" aria-hidden="true">
          <circle cx="9" cy="7" r="6" fill="#7898bc" stroke="#2c4868" />
          <path d="M5 4L9 3L13 6L12 10L8 8Z" fill="#c8d8e8" />
          <path d="M1 5L5 4L7 8L4 10Z" fill="#e8c040" />
          <path d="M5 11L10 9L12 13L8 15Z" fill="#3a5a80" />
        </svg>
        <h1 className="text-[10px] text-black">RFEM 5.23.02 x64 - [2020-07_IPE120-IH1.1, CC1*]</h1>
      </header>

      <nav className="flex h-[21px] shrink-0 items-center bg-[#cfd5df] text-[10px] text-[#4e5560]">
        <Grip />
        <svg viewBox="0 0 16 12" className="mr-2 h-[11px] w-[15px]" aria-hidden="true">
          <path d="M0 0H16V12H0Z" fill="#1a2a58" />
          <path d="M0 7H16M5 1V11M2 5H7M9 7L12 2L13 7" stroke="#fff" fill="none" />
        </svg>
        <div className="flex gap-[11px]">
          {MENU.map(([a, u, b]) => (
            <a key={u + b} href="#" className="whitespace-nowrap">{a}<span className="underline">{u}</span>{b}</a>
          ))}
        </div>
      </nav>

      <div className="flex h-[22px] shrink-0 items-center overflow-hidden bg-linear-to-b from-[#f4f6fb] to-[#dde2ed]">
        <Grip />
        <Tools items="page open stackA stackB save clip print preview | undo redo | selPar selEll selRing selNote selWin | *navList table | loadNew" />
        <div className="mr-1 flex h-[17px] w-[188px] shrink-0 items-stretch bg-white">
          <select aria-label="Caso de carga" className="min-w-0 flex-1 appearance-none bg-white pl-1 text-[10px] text-black">
            <option>CC1 - Symmetrisch</option>
          </select>
          <span className="flex w-3 items-center justify-center bg-[#e9ecf3]">
            <span className="border-x-[3px] border-t-[3px] border-x-transparent border-t-[#8a90a0]" />
          </span>
        </div>
        <Tools items="left right *viewP *viewX *viewEye xxx | glasses abacusA abacusB : gridHand gridSun *planeA planeB planeC gridTilt objSnap | move rotate mirror divide info settings gears :" />
      </div>

      <div className="flex h-[23px] shrink-0 items-center overflow-hidden border-t border-b-2 border-t-[#c6cdd9] border-b-[#9ba2ae] bg-linear-to-b from-[#f4f6fb] to-[#dde2ed]">
        <Grip />
        <Tools items="node v line member v poly v | supA supB supC | dimH v dimX frame | surf v opening v solidP v cubeB cubeN v | release ' loadP loadA loadB loadC loadD v : hand zoomW zoomX boxWire boxes | axX axY axZ axXm v scope v | cubeG ' : bent beam | memRes *rainbow heatCube supG plates notes v secCut grid4" />
      </div>

      <main className="flex min-h-0 flex-1">
        <aside className="relative flex w-[305px] shrink-0 flex-col border-l border-[#a9b6ca] bg-[#fbfbf3]">
          <div className="flex h-[17px] shrink-0 items-center bg-[#bcc4d0] pr-1 pl-[3px] text-[#4c5460]">
            <h2 className="flex-1 text-[10px]">Navegador de proyectos - Resultados</h2>
            <button type="button" aria-label="Fijar" className="mr-[7px]">
              <svg viewBox="0 0 8 8" className="size-2"><path d="M2 1H6V4.500H2ZM1 4.500H7M4 4.500V8" stroke="#555" strokeWidth="0.800" fill="none" /></svg>
            </button>
            <button type="button" aria-label="Cerrar">
              <svg viewBox="0 0 8 8" className="size-2"><path d="M0.500 0.500L7.500 7.500M7.500 0.500L0.500 7.500" stroke="#555" /></svg>
            </button>
          </div>
          <div className="flex min-h-0 flex-1">
            <div className="relative min-w-0 flex-1 overflow-hidden pt-[3px] pl-[3px]">
              <ul className="grid h-[688px] auto-rows-fr">
                {ROWS.map((row, i) => <TreeRow key={i} row={row} index={i} />)}
              </ul>
              <div className="pointer-events-none absolute top-[79px] left-1 h-[583px] w-[259px] border-[3px] border-[#22cf30] shadow-[1px_2px_3px_#0006,inset_0_2px_3px_#0004]" />
            </div>
            <div className="flex w-[14px] flex-col items-center bg-[#f0f0f0]">
              <svg viewBox="0 0 8 6" className="mt-2 h-[6px] w-2"><path d="M1 5L4 1.500L7 5" stroke="#444" strokeWidth="1.500" fill="none" /></svg>
              <span className="mt-[309px] w-[13px] flex-1 bg-[#cdcdcd]" />
            </div>
            <span className="w-px bg-[#e4e4e0]" />
          </div>
        </aside>
        <div className="w-[5px] shrink-0 border-x border-[#9aa6ba] bg-[#cdd6e4]" />
        <section className="relative flex min-w-0 flex-1 overflow-hidden border-l border-[#5a5f66] bg-white">
          <Model />
          <div className="absolute top-[6px] left-1 font-['Roboto','Liberation_Sans',sans-serif] text-[10px] leading-[12px] text-black">
            <p>Deformaciones Eps-eqv,Mises,+ [-]</p>
            <p>CC1 : Symmetrisch</p>
            <p>Cargas [kN], [kNm]</p>
          </div>
          <Panel />
        </section>
      </main>
    </div>
  );
}
